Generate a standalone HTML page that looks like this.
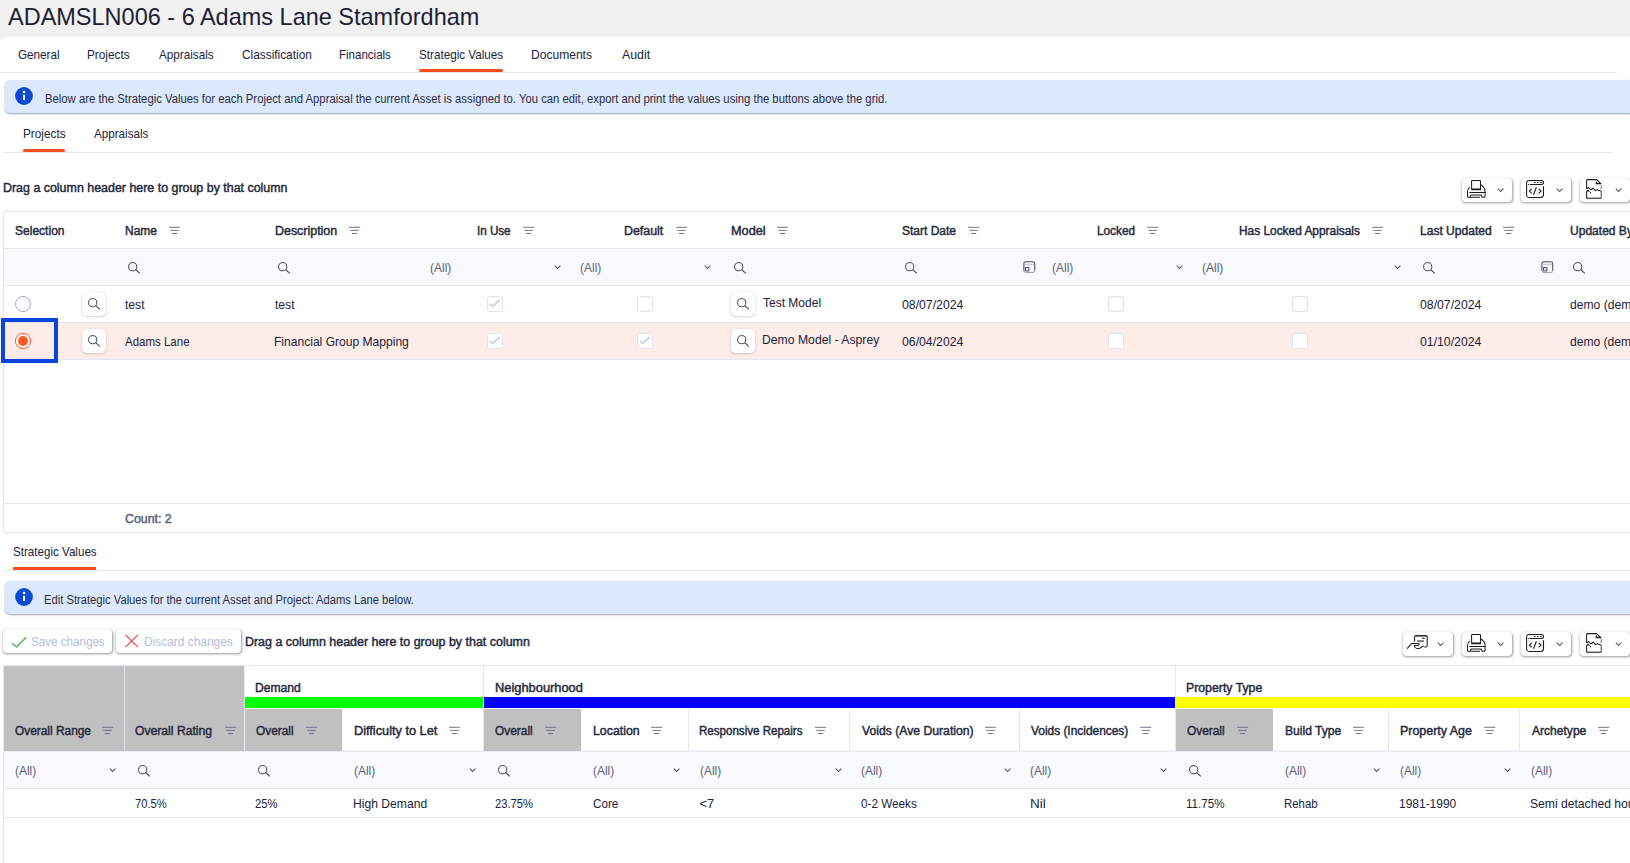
<!DOCTYPE html>
<html><head><meta charset="utf-8"><title>Strategic Values</title><style>
html,body{margin:0;padding:0;background:#fff}
body{width:1630px;height:863px;overflow:hidden;position:relative;font-family:"Liberation Sans",sans-serif;}
.a{position:absolute;display:block}
.t{position:absolute;white-space:pre;line-height:20px;height:20px;transform-origin:0 0}
</style></head><body>
<div class="a" style="left:0px;top:0px;width:1630px;height:47px;background:#f1f1f1;"></div>
<div class="a" style="left:0;top:37px;width:1630px;height:826px;background:#fff;border-top-left-radius:9px 5px"></div>
<div class="a" style="left:0px;top:72px;width:1617px;height:1px;background:#e4e7f1;"></div>
<div class="a" style="left:419px;top:69px;width:84px;height:3px;background:#ff4e1c;border-radius:2px"></div>
<div class="a" style="left:4.5px;top:80px;width:1630px;height:33px;background:#dce8fb;border-radius:5px;box-shadow:0 1px 2px rgba(40,50,80,.45)"></div>
<svg class="a" style="left:14px;top:86px" width="20" height="20" viewBox="0 0 20 20"><circle cx="10" cy="10" r="8.9" fill="#0b4bd2"/><rect x="9.1" y="8.7" width="1.9" height="5.3" fill="#fff"/><circle cx="10.05" cy="6" r="1.25" fill="#fff"/></svg>
<div class="a" style="left:3px;top:152px;width:1609px;height:1px;background:#e4e7f1;"></div>
<div class="a" style="left:23px;top:149px;width:42px;height:3px;background:#ff4e1c;border-radius:2px"></div>
<div class="a" style="left:1462px;top:178px;width:50px;height:24px;border-radius:4px;background:#fff;box-shadow:.5px 1px 2.5px rgba(30,30,40,.45),0 0 1px rgba(30,30,40,.14)"></div>
<svg class="a" style="left:1466px;top:179px" width="21" height="20" viewBox="0 0 21 20"><g stroke="#1b1b1f" stroke-width="1.05" fill="none"><path d="M5.6 10.7V2.2Q5.6 1.4 6.4 1.4H13.7Q14.5 1.4 14.5 2.2V10.7H5.6M5.8 10H14.4"/><path d="M3.7 8.1C2.2 9.4 1.5 11 1.5 13V17.2Q1.5 18.2 2.5 18.2H3.6Q4.5 18.2 4.5 17.2V16.9Q4.5 15.9 5.5 15.9H14.7Q15.7 15.9 15.7 16.9V17.2Q15.7 18.2 16.7 18.2H18.1Q19.1 18.2 19.1 17.2V13C19.1 10 17.6 7.6 15 6"/><path d="M4.5 18.2H14M3.3 13.4H19.2"/></g></svg>
<svg class="a" style="left:1497px;top:188px" width="8" height="6" viewBox="0 0 8 6"><path d="M0.8 0.6L3.6 3.5L6.4 0.6" stroke="#4a4f68" stroke-width="1.05" fill="none"/></svg>
<div class="a" style="left:1521px;top:178px;width:50px;height:24px;border-radius:4px;background:#fff;box-shadow:.5px 1px 2.5px rgba(30,30,40,.45),0 0 1px rgba(30,30,40,.14)"></div>
<svg class="a" style="left:1525px;top:179px" width="21" height="20" viewBox="0 0 21 20"><g stroke="#1b1b1f" stroke-width="1.05" fill="none"><path d="M18.5 7.3V15.8Q18.5 18.4 15.9 18.4H4.2Q1.6 18.4 1.6 15.8V4Q1.6 1.4 4.2 1.4H16.5A2 2 0 0 1 16.5 5.4H4.6M2.9 5.4h0.9"/><path d="M9 3.5h1.6M12 3.5h1.6M15 3.5h1.7" stroke-width="1"/><path d="M6.7 9.8L4.4 12.1L6.7 14.4M11.4 8.3L8.5 15.8M13.7 9.8L16 12.1L13.7 14.4" stroke-width="1.1"/></g></svg>
<svg class="a" style="left:1556px;top:188px" width="8" height="6" viewBox="0 0 8 6"><path d="M0.8 0.6L3.6 3.5L6.4 0.6" stroke="#4a4f68" stroke-width="1.05" fill="none"/></svg>
<div class="a" style="left:1580px;top:178px;width:50px;height:24px;border-radius:4px;background:#fff;box-shadow:.5px 1px 2.5px rgba(30,30,40,.45),0 0 1px rgba(30,30,40,.14)"></div>
<svg class="a" style="left:1585px;top:178px" width="19" height="23" viewBox="0 0 19 23"><g stroke="#1b1b1f" stroke-width="1.05" fill="none"><path d="M1.6 10.8V2.4Q1.6 1.6 2.4 1.6H11.6L16.3 6.1"/><path d="M11.3 3.6V5.5H15.6" stroke-width="1.3"/><path d="M16.2 7.2V10.9" stroke="#777"/><path d="M1.6 10.9L3.4 9.4L5.8 11.8L8.1 10.2L10.5 12.6L12.3 11.5L14.2 12.6L16.2 12.9"/><path d="M1.6 13.4L3.1 12.3L4.4 13.8M5 14.6h1"/><path d="M1.6 13.2V20.2"/><path d="M16.2 13V20.2" stroke="#555"/><path d="M1.4 20.3H16.4" stroke="#555" stroke-width="1.5"/></g></svg>
<svg class="a" style="left:1615px;top:188px" width="8" height="6" viewBox="0 0 8 6"><path d="M0.8 0.6L3.6 3.5L6.4 0.6" stroke="#4a4f68" stroke-width="1.05" fill="none"/></svg>
<div class="a" style="left:3px;top:211px;width:1630px;height:1px;background:#e4e7f1;"></div>
<div class="a" style="left:3px;top:211px;width:1px;height:322px;background:#e4e7f1;"></div>
<div class="a" style="left:4px;top:248px;width:1630px;height:1px;background:#e4e7f1;"></div>
<div class="a" style="left:4px;top:249px;width:1630px;height:36px;background:#f9fafe;"></div>
<div class="a" style="left:4px;top:285px;width:1630px;height:1px;background:#e4e7f1;"></div>
<div class="a" style="left:4px;top:322px;width:1630px;height:1px;background:#e4e7f1;"></div>
<div class="a" style="left:4px;top:323px;width:1630px;height:36px;background:#fdece8;"></div>
<div class="a" style="left:4px;top:359px;width:1630px;height:1px;background:#e4e7f1;"></div>
<div class="a" style="left:4px;top:503px;width:1630px;height:1px;background:#e4e7f1;"></div>
<div class="a" style="left:3px;top:532px;width:1630px;height:1px;background:#e4e7f1;"></div>
<svg class="a" style="left:169.3px;top:226px" width="12" height="9" viewBox="0 0 12 9"><path d="M0 1.3H11.2M1.4 4.4H9.8M3 7.5H8.2" stroke="#6a6f86" stroke-width="0.95" fill="none"/></svg>
<svg class="a" style="left:349px;top:226px" width="12" height="9" viewBox="0 0 12 9"><path d="M0 1.3H11.2M1.4 4.4H9.8M3 7.5H8.2" stroke="#6a6f86" stroke-width="0.95" fill="none"/></svg>
<svg class="a" style="left:523px;top:226px" width="12" height="9" viewBox="0 0 12 9"><path d="M0 1.3H11.2M1.4 4.4H9.8M3 7.5H8.2" stroke="#6a6f86" stroke-width="0.95" fill="none"/></svg>
<svg class="a" style="left:676.3px;top:226px" width="12" height="9" viewBox="0 0 12 9"><path d="M0 1.3H11.2M1.4 4.4H9.8M3 7.5H8.2" stroke="#6a6f86" stroke-width="0.95" fill="none"/></svg>
<svg class="a" style="left:776.8px;top:226px" width="12" height="9" viewBox="0 0 12 9"><path d="M0 1.3H11.2M1.4 4.4H9.8M3 7.5H8.2" stroke="#6a6f86" stroke-width="0.95" fill="none"/></svg>
<svg class="a" style="left:968px;top:226px" width="12" height="9" viewBox="0 0 12 9"><path d="M0 1.3H11.2M1.4 4.4H9.8M3 7.5H8.2" stroke="#6a6f86" stroke-width="0.95" fill="none"/></svg>
<svg class="a" style="left:1146.5px;top:226px" width="12" height="9" viewBox="0 0 12 9"><path d="M0 1.3H11.2M1.4 4.4H9.8M3 7.5H8.2" stroke="#6a6f86" stroke-width="0.95" fill="none"/></svg>
<svg class="a" style="left:1372.3px;top:226px" width="12" height="9" viewBox="0 0 12 9"><path d="M0 1.3H11.2M1.4 4.4H9.8M3 7.5H8.2" stroke="#6a6f86" stroke-width="0.95" fill="none"/></svg>
<svg class="a" style="left:1503px;top:226px" width="12" height="9" viewBox="0 0 12 9"><path d="M0 1.3H11.2M1.4 4.4H9.8M3 7.5H8.2" stroke="#6a6f86" stroke-width="0.95" fill="none"/></svg>
<svg class="a" style="left:128px;top:262px" width="13" height="13" viewBox="0 0 13 13"><circle cx="4.7" cy="4.7" r="4.1" stroke="#3b4058" stroke-width="1" fill="none"/><path d="M7.7 7.7L11.8 11.4" stroke="#3b4058" stroke-width="1.1" fill="none"/></svg>
<svg class="a" style="left:278px;top:262px" width="13" height="13" viewBox="0 0 13 13"><circle cx="4.7" cy="4.7" r="4.1" stroke="#3b4058" stroke-width="1" fill="none"/><path d="M7.7 7.7L11.8 11.4" stroke="#3b4058" stroke-width="1.1" fill="none"/></svg>
<svg class="a" style="left:733.7px;top:262px" width="13" height="13" viewBox="0 0 13 13"><circle cx="4.7" cy="4.7" r="4.1" stroke="#3b4058" stroke-width="1" fill="none"/><path d="M7.7 7.7L11.8 11.4" stroke="#3b4058" stroke-width="1.1" fill="none"/></svg>
<svg class="a" style="left:904.9px;top:262px" width="13" height="13" viewBox="0 0 13 13"><circle cx="4.7" cy="4.7" r="4.1" stroke="#3b4058" stroke-width="1" fill="none"/><path d="M7.7 7.7L11.8 11.4" stroke="#3b4058" stroke-width="1.1" fill="none"/></svg>
<svg class="a" style="left:1422.7px;top:262px" width="13" height="13" viewBox="0 0 13 13"><circle cx="4.7" cy="4.7" r="4.1" stroke="#3b4058" stroke-width="1" fill="none"/><path d="M7.7 7.7L11.8 11.4" stroke="#3b4058" stroke-width="1.1" fill="none"/></svg>
<svg class="a" style="left:1572.9px;top:262px" width="13" height="13" viewBox="0 0 13 13"><circle cx="4.7" cy="4.7" r="4.1" stroke="#3b4058" stroke-width="1" fill="none"/><path d="M7.7 7.7L11.8 11.4" stroke="#3b4058" stroke-width="1.1" fill="none"/></svg>
<svg class="a" style="left:554.3px;top:265px" width="8" height="6" viewBox="0 0 8 6"><path d="M0.8 0.6L3.6 3.5L6.4 0.6" stroke="#4a4f68" stroke-width="1.05" fill="none"/></svg>
<svg class="a" style="left:704.3px;top:265px" width="8" height="6" viewBox="0 0 8 6"><path d="M0.8 0.6L3.6 3.5L6.4 0.6" stroke="#4a4f68" stroke-width="1.05" fill="none"/></svg>
<svg class="a" style="left:1175.7px;top:265px" width="8" height="6" viewBox="0 0 8 6"><path d="M0.8 0.6L3.6 3.5L6.4 0.6" stroke="#4a4f68" stroke-width="1.05" fill="none"/></svg>
<svg class="a" style="left:1393.6px;top:265px" width="8" height="6" viewBox="0 0 8 6"><path d="M0.8 0.6L3.6 3.5L6.4 0.6" stroke="#4a4f68" stroke-width="1.05" fill="none"/></svg>
<svg class="a" style="left:1022.5px;top:260.5px" width="13" height="13" viewBox="0 0 13 13"><path d="M0.9 9.8V2.6Q0.9 0.7 2.8 0.7H9.8Q11.7 0.7 11.7 2.6V9.8" stroke="#454a66" stroke-width="1.05" fill="none"/><path d="M0.9 9.6Q0.9 11.5 2.8 11.5H9.8Q11.7 11.5 11.7 9.6" stroke="#9fa3b8" stroke-width="1.1" fill="none"/><path d="M1.4 3.3H11.2" stroke="#c2c5d3" stroke-width="1.2"/><rect x="2.6" y="6.6" width="3.3" height="3.3" stroke="#454a66" stroke-width="1" fill="none"/></svg>
<svg class="a" style="left:1540.8px;top:260.5px" width="13" height="13" viewBox="0 0 13 13"><path d="M0.9 9.8V2.6Q0.9 0.7 2.8 0.7H9.8Q11.7 0.7 11.7 2.6V9.8" stroke="#454a66" stroke-width="1.05" fill="none"/><path d="M0.9 9.6Q0.9 11.5 2.8 11.5H9.8Q11.7 11.5 11.7 9.6" stroke="#9fa3b8" stroke-width="1.1" fill="none"/><path d="M1.4 3.3H11.2" stroke="#c2c5d3" stroke-width="1.2"/><rect x="2.6" y="6.6" width="3.3" height="3.3" stroke="#454a66" stroke-width="1" fill="none"/></svg>
<div class="a" style="left:82px;top:292px;width:24px;height:24px;border-radius:5px;background:#fff;box-shadow:0 1px 3px rgba(60,64,90,.22),0 0 1px rgba(60,64,90,.18)"></div>
<svg class="a" style="left:88px;top:298px" width="13" height="13" viewBox="0 0 13 13"><circle cx="4.7" cy="4.7" r="4.1" stroke="#3b4058" stroke-width="1" fill="none"/><path d="M7.7 7.7L11.8 11.4" stroke="#3b4058" stroke-width="1.1" fill="none"/></svg>
<div class="a" style="left:487px;top:296px;width:16px;height:16px;box-sizing:border-box;border:1px solid #e0e3ef;border-radius:3px;background:#fff"></div>
<svg class="a" style="left:487px;top:296px" width="16" height="16" viewBox="0 0 16 16"><path d="M2.8 7.6L5.6 10.4L12.8 3.9" stroke="#b3bfe3" stroke-width="1.2" fill="none"/></svg>
<div class="a" style="left:637px;top:296px;width:16px;height:16px;box-sizing:border-box;border:1px solid #e0e3ef;border-radius:3px;background:#fff"></div>
<div class="a" style="left:1108px;top:296px;width:16px;height:16px;box-sizing:border-box;border:1px solid #e0e3ef;border-radius:3px;background:#fff"></div>
<div class="a" style="left:1292px;top:296px;width:16px;height:16px;box-sizing:border-box;border:1px solid #e0e3ef;border-radius:3px;background:#fff"></div>
<div class="a" style="left:731px;top:292px;width:24px;height:24px;border-radius:5px;background:#fff;box-shadow:0 1px 3px rgba(60,64,90,.22),0 0 1px rgba(60,64,90,.18)"></div>
<svg class="a" style="left:737px;top:298px" width="13" height="13" viewBox="0 0 13 13"><circle cx="4.7" cy="4.7" r="4.1" stroke="#3b4058" stroke-width="1" fill="none"/><path d="M7.7 7.7L11.8 11.4" stroke="#3b4058" stroke-width="1.1" fill="none"/></svg>
<div class="a" style="left:82px;top:329px;width:24px;height:24px;border-radius:5px;background:#fff;box-shadow:0 1px 3px rgba(60,64,90,.22),0 0 1px rgba(60,64,90,.18)"></div>
<svg class="a" style="left:88px;top:335px" width="13" height="13" viewBox="0 0 13 13"><circle cx="4.7" cy="4.7" r="4.1" stroke="#3b4058" stroke-width="1" fill="none"/><path d="M7.7 7.7L11.8 11.4" stroke="#3b4058" stroke-width="1.1" fill="none"/></svg>
<div class="a" style="left:487px;top:333px;width:16px;height:16px;box-sizing:border-box;border:1px solid #e0e3ef;border-radius:3px;background:#fff"></div>
<svg class="a" style="left:487px;top:333px" width="16" height="16" viewBox="0 0 16 16"><path d="M2.8 7.6L5.6 10.4L12.8 3.9" stroke="#b3bfe3" stroke-width="1.2" fill="none"/></svg>
<div class="a" style="left:637px;top:333px;width:16px;height:16px;box-sizing:border-box;border:1px solid #e0e3ef;border-radius:3px;background:#fff"></div>
<svg class="a" style="left:637px;top:333px" width="16" height="16" viewBox="0 0 16 16"><path d="M2.8 7.6L5.6 10.4L12.8 3.9" stroke="#b3bfe3" stroke-width="1.2" fill="none"/></svg>
<div class="a" style="left:1108px;top:333px;width:16px;height:16px;box-sizing:border-box;border:1px solid #e0e3ef;border-radius:3px;background:#fff"></div>
<div class="a" style="left:1292px;top:333px;width:16px;height:16px;box-sizing:border-box;border:1px solid #e0e3ef;border-radius:3px;background:#fff"></div>
<div class="a" style="left:731px;top:329px;width:24px;height:24px;border-radius:5px;background:#fff;box-shadow:0 1px 3px rgba(60,64,90,.22),0 0 1px rgba(60,64,90,.18)"></div>
<svg class="a" style="left:737px;top:335px" width="13" height="13" viewBox="0 0 13 13"><circle cx="4.7" cy="4.7" r="4.1" stroke="#3b4058" stroke-width="1" fill="none"/><path d="M7.7 7.7L11.8 11.4" stroke="#3b4058" stroke-width="1.1" fill="none"/></svg>
<div class="a" style="left:15px;top:296px;width:16px;height:16px;box-sizing:border-box;border:1px solid #a3a9c6;border-radius:50%;background:#fff"></div>
<svg class="a" style="left:14px;top:332px" width="18" height="18" viewBox="0 0 18 18"><circle cx="9" cy="9" r="7.6" fill="#fff" stroke="#ff5722" stroke-width="1"/><circle cx="9" cy="9" r="4.9" fill="#ff5722"/></svg>
<div class="a" style="left:1px;top:318px;width:57px;height:45px;box-sizing:border-box;border:4px solid #0645e2"></div>
<div class="a" style="left:3px;top:570px;width:1630px;height:1px;background:#e4e7f1;"></div>
<div class="a" style="left:13px;top:567px;width:83px;height:3px;background:#ff4e1c;"></div>
<div class="a" style="left:4.5px;top:581px;width:1630px;height:33px;background:#dce8fb;border-radius:5px;box-shadow:0 1px 2px rgba(40,50,80,.45)"></div>
<svg class="a" style="left:14px;top:587px" width="20" height="20" viewBox="0 0 20 20"><circle cx="10" cy="10" r="8.9" fill="#0b4bd2"/><rect x="9.1" y="8.7" width="1.9" height="5.3" fill="#fff"/><circle cx="10.05" cy="6" r="1.25" fill="#fff"/></svg>
<div class="a" style="left:3px;top:629px;width:109px;height:24px;border-radius:4px;background:#fff;box-shadow:.5px 1px 2.5px rgba(30,30,40,.45),0 0 1px rgba(30,30,40,.14)"></div>
<div class="a" style="left:116px;top:629px;width:125px;height:24px;border-radius:4px;background:#fff;box-shadow:.5px 1px 2.5px rgba(30,30,40,.45),0 0 1px rgba(30,30,40,.14)"></div>
<svg class="a" style="left:11px;top:634px" width="16" height="14" viewBox="0 0 16 14"><path d="M1 9.3L5.6 12.9L15.1 3.2" stroke="#3fb24b" stroke-width="1.3" fill="none"/></svg>
<svg class="a" style="left:124px;top:634px" width="16" height="14" viewBox="0 0 16 14"><path d="M1.4 0.8L14 13.2M14 0.8L1.4 13.2" stroke="#ea4040" stroke-width="1.15" fill="none"/></svg>
<div class="a" style="left:1403px;top:632px;width:50px;height:24px;border-radius:4px;background:#fff;box-shadow:.5px 1px 2.5px rgba(30,30,40,.45),0 0 1px rgba(30,30,40,.14)"></div>
<svg class="a" style="left:1406px;top:634px" width="24" height="17" viewBox="0 0 24 17"><g stroke="#1b1b1f" stroke-width="1.05" fill="none"><path d="M8.6 7.6V3Q8.6 1.6 10 1.6H19.8Q21.2 1.6 21.2 3V11.6Q21.2 13 19.8 13H18.2"/><path d="M9.8 2.2H20" stroke="#666"/><path d="M16.1 4.3H18.8"/><path d="M11.1 7.1H17.9" stroke="#555" stroke-width="1.5"/><path d="M1.1 14.6L5.7 9.5H11.7Q13.4 9.5 13.1 10.6Q12.8 11.5 11.5 11.5H8.3C8.6 13.6 10.8 14.7 12.8 14.5C14.4 14.4 15.4 12.9 16.4 12.6L17.8 12.3"/></g></svg>
<svg class="a" style="left:1437px;top:642px" width="8" height="6" viewBox="0 0 8 6"><path d="M0.8 0.6L3.6 3.5L6.4 0.6" stroke="#4a4f68" stroke-width="1.05" fill="none"/></svg>
<div class="a" style="left:1462px;top:632px;width:50px;height:24px;border-radius:4px;background:#fff;box-shadow:.5px 1px 2.5px rgba(30,30,40,.45),0 0 1px rgba(30,30,40,.14)"></div>
<svg class="a" style="left:1466px;top:633px" width="21" height="20" viewBox="0 0 21 20"><g stroke="#1b1b1f" stroke-width="1.05" fill="none"><path d="M5.6 10.7V2.2Q5.6 1.4 6.4 1.4H13.7Q14.5 1.4 14.5 2.2V10.7H5.6M5.8 10H14.4"/><path d="M3.7 8.1C2.2 9.4 1.5 11 1.5 13V17.2Q1.5 18.2 2.5 18.2H3.6Q4.5 18.2 4.5 17.2V16.9Q4.5 15.9 5.5 15.9H14.7Q15.7 15.9 15.7 16.9V17.2Q15.7 18.2 16.7 18.2H18.1Q19.1 18.2 19.1 17.2V13C19.1 10 17.6 7.6 15 6"/><path d="M4.5 18.2H14M3.3 13.4H19.2"/></g></svg>
<svg class="a" style="left:1497px;top:642px" width="8" height="6" viewBox="0 0 8 6"><path d="M0.8 0.6L3.6 3.5L6.4 0.6" stroke="#4a4f68" stroke-width="1.05" fill="none"/></svg>
<div class="a" style="left:1521px;top:632px;width:50px;height:24px;border-radius:4px;background:#fff;box-shadow:.5px 1px 2.5px rgba(30,30,40,.45),0 0 1px rgba(30,30,40,.14)"></div>
<svg class="a" style="left:1525px;top:633px" width="21" height="20" viewBox="0 0 21 20"><g stroke="#1b1b1f" stroke-width="1.05" fill="none"><path d="M18.5 7.3V15.8Q18.5 18.4 15.9 18.4H4.2Q1.6 18.4 1.6 15.8V4Q1.6 1.4 4.2 1.4H16.5A2 2 0 0 1 16.5 5.4H4.6M2.9 5.4h0.9"/><path d="M9 3.5h1.6M12 3.5h1.6M15 3.5h1.7" stroke-width="1"/><path d="M6.7 9.8L4.4 12.1L6.7 14.4M11.4 8.3L8.5 15.8M13.7 9.8L16 12.1L13.7 14.4" stroke-width="1.1"/></g></svg>
<svg class="a" style="left:1556px;top:642px" width="8" height="6" viewBox="0 0 8 6"><path d="M0.8 0.6L3.6 3.5L6.4 0.6" stroke="#4a4f68" stroke-width="1.05" fill="none"/></svg>
<div class="a" style="left:1580px;top:632px;width:50px;height:24px;border-radius:4px;background:#fff;box-shadow:.5px 1px 2.5px rgba(30,30,40,.45),0 0 1px rgba(30,30,40,.14)"></div>
<svg class="a" style="left:1585px;top:632px" width="19" height="23" viewBox="0 0 19 23"><g stroke="#1b1b1f" stroke-width="1.05" fill="none"><path d="M1.6 10.8V2.4Q1.6 1.6 2.4 1.6H11.6L16.3 6.1"/><path d="M11.3 3.6V5.5H15.6" stroke-width="1.3"/><path d="M16.2 7.2V10.9" stroke="#777"/><path d="M1.6 10.9L3.4 9.4L5.8 11.8L8.1 10.2L10.5 12.6L12.3 11.5L14.2 12.6L16.2 12.9"/><path d="M1.6 13.4L3.1 12.3L4.4 13.8M5 14.6h1"/><path d="M1.6 13.2V20.2"/><path d="M16.2 13V20.2" stroke="#555"/><path d="M1.4 20.3H16.4" stroke="#555" stroke-width="1.5"/></g></svg>
<svg class="a" style="left:1615px;top:642px" width="8" height="6" viewBox="0 0 8 6"><path d="M0.8 0.6L3.6 3.5L6.4 0.6" stroke="#4a4f68" stroke-width="1.05" fill="none"/></svg>
<div class="a" style="left:3px;top:665px;width:1630px;height:1px;background:#e4e7f1;"></div>
<div class="a" style="left:3px;top:665px;width:1px;height:200px;background:#e4e7f1;"></div>
<div class="a" style="left:4px;top:750px;width:1630px;height:1px;background:#f1f3f9;"></div>
<div class="a" style="left:4px;top:666px;width:120px;height:85px;background:#c0c0c0;"></div>
<div class="a" style="left:125px;top:666px;width:119px;height:85px;background:#c0c0c0;"></div>
<div class="a" style="left:245px;top:697px;width:238px;height:11px;background:#00ff00;"></div>
<div class="a" style="left:484px;top:697px;width:691px;height:11px;background:#0000ff;"></div>
<div class="a" style="left:1176px;top:697px;width:460px;height:11px;background:#ffff00;"></div>
<div class="a" style="left:245px;top:709px;width:97px;height:42px;background:#c0c0c0;"></div>
<div class="a" style="left:484px;top:709px;width:97px;height:42px;background:#c0c0c0;"></div>
<div class="a" style="left:1176px;top:709px;width:97px;height:42px;background:#c0c0c0;"></div>
<div class="a" style="left:124px;top:666px;width:1px;height:85px;background:#dfe1ea;"></div>
<div class="a" style="left:244px;top:666px;width:1px;height:85px;background:#e8eaf2;"></div>
<div class="a" style="left:483px;top:666px;width:1px;height:85px;background:#e4e7f1;"></div>
<div class="a" style="left:1175px;top:666px;width:1px;height:85px;background:#e4e7f1;"></div>
<div class="a" style="left:688px;top:709px;width:1px;height:42px;background:#e4e7f1;"></div>
<div class="a" style="left:849px;top:709px;width:1px;height:42px;background:#e4e7f1;"></div>
<div class="a" style="left:1019px;top:709px;width:1px;height:42px;background:#e4e7f1;"></div>
<div class="a" style="left:1388px;top:709px;width:1px;height:42px;background:#e4e7f1;"></div>
<div class="a" style="left:1519px;top:709px;width:1px;height:42px;background:#e4e7f1;"></div>
<div class="a" style="left:4px;top:751px;width:1630px;height:1px;background:#e9ecf5;"></div>
<div class="a" style="left:4px;top:752px;width:1630px;height:36px;background:#f9fafe;"></div>
<div class="a" style="left:4px;top:788px;width:1630px;height:1px;background:#e4e7f1;"></div>
<div class="a" style="left:4px;top:817px;width:1630px;height:1px;background:#e4e7f1;"></div>
<svg class="a" style="left:102.3px;top:726px" width="12" height="9" viewBox="0 0 12 9"><path d="M0 1.3H11.2M1.4 4.4H9.8M3 7.5H8.2" stroke="#6a6f86" stroke-width="0.95" fill="none"/></svg>
<svg class="a" style="left:224.5px;top:726px" width="12" height="9" viewBox="0 0 12 9"><path d="M0 1.3H11.2M1.4 4.4H9.8M3 7.5H8.2" stroke="#6a6f86" stroke-width="0.95" fill="none"/></svg>
<svg class="a" style="left:305.5px;top:726px" width="12" height="9" viewBox="0 0 12 9"><path d="M0 1.3H11.2M1.4 4.4H9.8M3 7.5H8.2" stroke="#6a6f86" stroke-width="0.95" fill="none"/></svg>
<svg class="a" style="left:449px;top:726px" width="12" height="9" viewBox="0 0 12 9"><path d="M0 1.3H11.2M1.4 4.4H9.8M3 7.5H8.2" stroke="#6a6f86" stroke-width="0.95" fill="none"/></svg>
<svg class="a" style="left:544.7px;top:726px" width="12" height="9" viewBox="0 0 12 9"><path d="M0 1.3H11.2M1.4 4.4H9.8M3 7.5H8.2" stroke="#6a6f86" stroke-width="0.95" fill="none"/></svg>
<svg class="a" style="left:651.3px;top:726px" width="12" height="9" viewBox="0 0 12 9"><path d="M0 1.3H11.2M1.4 4.4H9.8M3 7.5H8.2" stroke="#6a6f86" stroke-width="0.95" fill="none"/></svg>
<svg class="a" style="left:814.7px;top:726px" width="12" height="9" viewBox="0 0 12 9"><path d="M0 1.3H11.2M1.4 4.4H9.8M3 7.5H8.2" stroke="#6a6f86" stroke-width="0.95" fill="none"/></svg>
<svg class="a" style="left:985px;top:726px" width="12" height="9" viewBox="0 0 12 9"><path d="M0 1.3H11.2M1.4 4.4H9.8M3 7.5H8.2" stroke="#6a6f86" stroke-width="0.95" fill="none"/></svg>
<svg class="a" style="left:1140px;top:726px" width="12" height="9" viewBox="0 0 12 9"><path d="M0 1.3H11.2M1.4 4.4H9.8M3 7.5H8.2" stroke="#6a6f86" stroke-width="0.95" fill="none"/></svg>
<svg class="a" style="left:1236.5px;top:726px" width="12" height="9" viewBox="0 0 12 9"><path d="M0 1.3H11.2M1.4 4.4H9.8M3 7.5H8.2" stroke="#6a6f86" stroke-width="0.95" fill="none"/></svg>
<svg class="a" style="left:1352.8px;top:726px" width="12" height="9" viewBox="0 0 12 9"><path d="M0 1.3H11.2M1.4 4.4H9.8M3 7.5H8.2" stroke="#6a6f86" stroke-width="0.95" fill="none"/></svg>
<svg class="a" style="left:1483.8px;top:726px" width="12" height="9" viewBox="0 0 12 9"><path d="M0 1.3H11.2M1.4 4.4H9.8M3 7.5H8.2" stroke="#6a6f86" stroke-width="0.95" fill="none"/></svg>
<svg class="a" style="left:1597.5px;top:726px" width="12" height="9" viewBox="0 0 12 9"><path d="M0 1.3H11.2M1.4 4.4H9.8M3 7.5H8.2" stroke="#6a6f86" stroke-width="0.95" fill="none"/></svg>
<svg class="a" style="left:138.4px;top:765px" width="13" height="13" viewBox="0 0 13 13"><circle cx="4.7" cy="4.7" r="4.1" stroke="#3b4058" stroke-width="1" fill="none"/><path d="M7.7 7.7L11.8 11.4" stroke="#3b4058" stroke-width="1.1" fill="none"/></svg>
<svg class="a" style="left:258.4px;top:765px" width="13" height="13" viewBox="0 0 13 13"><circle cx="4.7" cy="4.7" r="4.1" stroke="#3b4058" stroke-width="1" fill="none"/><path d="M7.7 7.7L11.8 11.4" stroke="#3b4058" stroke-width="1.1" fill="none"/></svg>
<svg class="a" style="left:498px;top:765px" width="13" height="13" viewBox="0 0 13 13"><circle cx="4.7" cy="4.7" r="4.1" stroke="#3b4058" stroke-width="1" fill="none"/><path d="M7.7 7.7L11.8 11.4" stroke="#3b4058" stroke-width="1.1" fill="none"/></svg>
<svg class="a" style="left:1189.4px;top:765px" width="13" height="13" viewBox="0 0 13 13"><circle cx="4.7" cy="4.7" r="4.1" stroke="#3b4058" stroke-width="1" fill="none"/><path d="M7.7 7.7L11.8 11.4" stroke="#3b4058" stroke-width="1.1" fill="none"/></svg>
<svg class="a" style="left:109px;top:768px" width="8" height="6" viewBox="0 0 8 6"><path d="M0.8 0.6L3.6 3.5L6.4 0.6" stroke="#4a4f68" stroke-width="1.05" fill="none"/></svg>
<svg class="a" style="left:468.5px;top:768px" width="8" height="6" viewBox="0 0 8 6"><path d="M0.8 0.6L3.6 3.5L6.4 0.6" stroke="#4a4f68" stroke-width="1.05" fill="none"/></svg>
<svg class="a" style="left:672.6px;top:768px" width="8" height="6" viewBox="0 0 8 6"><path d="M0.8 0.6L3.6 3.5L6.4 0.6" stroke="#4a4f68" stroke-width="1.05" fill="none"/></svg>
<svg class="a" style="left:834.6px;top:768px" width="8" height="6" viewBox="0 0 8 6"><path d="M0.8 0.6L3.6 3.5L6.4 0.6" stroke="#4a4f68" stroke-width="1.05" fill="none"/></svg>
<svg class="a" style="left:1003.9px;top:768px" width="8" height="6" viewBox="0 0 8 6"><path d="M0.8 0.6L3.6 3.5L6.4 0.6" stroke="#4a4f68" stroke-width="1.05" fill="none"/></svg>
<svg class="a" style="left:1160px;top:768px" width="8" height="6" viewBox="0 0 8 6"><path d="M0.8 0.6L3.6 3.5L6.4 0.6" stroke="#4a4f68" stroke-width="1.05" fill="none"/></svg>
<svg class="a" style="left:1373.4px;top:768px" width="8" height="6" viewBox="0 0 8 6"><path d="M0.8 0.6L3.6 3.5L6.4 0.6" stroke="#4a4f68" stroke-width="1.05" fill="none"/></svg>
<svg class="a" style="left:1504px;top:768px" width="8" height="6" viewBox="0 0 8 6"><path d="M0.8 0.6L3.6 3.5L6.4 0.6" stroke="#4a4f68" stroke-width="1.05" fill="none"/></svg>
<div class="t" style="left:8.20px;top:6.78px;font-size:24px;font-weight:400;color:#1d2136;transform:scaleX(0.9788)">ADAMSLN006 - 6 Adams Lane Stamfordham</div>
<div class="t" style="left:17.75px;top:44.80px;font-size:13px;font-weight:400;color:#20243a;transform:scaleX(0.9000)">General</div>
<div class="t" style="left:87.49px;top:44.80px;font-size:13px;font-weight:400;color:#20243a;transform:scaleX(0.9077)">Projects</div>
<div class="t" style="left:158.60px;top:44.80px;font-size:13px;font-weight:400;color:#20243a;transform:scaleX(0.8996)">Appraisals</div>
<div class="t" style="left:241.74px;top:44.80px;font-size:13px;font-weight:400;color:#20243a;transform:scaleX(0.9116)">Classification</div>
<div class="t" style="left:339.11px;top:44.80px;font-size:13px;font-weight:400;color:#20243a;transform:scaleX(0.8860)">Financials</div>
<div class="t" style="left:419.05px;top:44.80px;font-size:13px;font-weight:400;color:#20243a;transform:scaleX(0.8981)">Strategic Values</div>
<div class="t" style="left:531.47px;top:44.80px;font-size:13px;font-weight:400;color:#20243a;transform:scaleX(0.9276)">Documents</div>
<div class="t" style="left:621.50px;top:44.80px;font-size:13px;font-weight:400;color:#20243a;transform:scaleX(0.9492)">Audit</div>
<div class="t" style="left:44.60px;top:88.67px;font-size:12.5px;font-weight:400;color:#2a2e45;transform:scaleX(0.9042)">Below are the Strategic Values for each Project and Appraisal the current Asset is assigned to. You can edit, export and print the values using the buttons above the grid.</div>
<div class="t" style="left:22.59px;top:124.00px;font-size:13px;font-weight:400;color:#20243a;transform:scaleX(0.9077)">Projects</div>
<div class="t" style="left:94.00px;top:124.00px;font-size:13px;font-weight:400;color:#20243a;transform:scaleX(0.8963)">Appraisals</div>
<div class="t" style="left:3.24px;top:178.04px;font-size:12.3px;font-weight:400;-webkit-text-stroke:0.45px currentColor;color:#262a3d;transform:scaleX(1.0103)">Drag a column header here to group by that column</div>
<div class="t" style="left:15.36px;top:220.94px;font-size:12.3px;font-weight:400;-webkit-text-stroke:0.45px currentColor;color:#262a3d;transform:scaleX(0.9789)">Selection</div>
<div class="t" style="left:125.07px;top:220.94px;font-size:12.3px;font-weight:400;-webkit-text-stroke:0.45px currentColor;color:#262a3d;transform:scaleX(0.9732)">Name</div>
<div class="t" style="left:274.84px;top:220.94px;font-size:12.3px;font-weight:400;-webkit-text-stroke:0.45px currentColor;color:#262a3d;transform:scaleX(1.0108)">Description</div>
<div class="t" style="left:477.29px;top:220.94px;font-size:12.3px;font-weight:400;-webkit-text-stroke:0.45px currentColor;color:#262a3d;transform:scaleX(0.9449)">In Use</div>
<div class="t" style="left:624.34px;top:220.94px;font-size:12.3px;font-weight:400;-webkit-text-stroke:0.45px currentColor;color:#262a3d;transform:scaleX(1.0078)">Default</div>
<div class="t" style="left:730.52px;top:220.94px;font-size:12.3px;font-weight:400;-webkit-text-stroke:0.45px currentColor;color:#262a3d;transform:scaleX(1.0357)">Model</div>
<div class="t" style="left:902.06px;top:220.94px;font-size:12.3px;font-weight:400;-webkit-text-stroke:0.45px currentColor;color:#262a3d;transform:scaleX(0.9753)">Start Date</div>
<div class="t" style="left:1096.58px;top:220.94px;font-size:12.3px;font-weight:400;-webkit-text-stroke:0.45px currentColor;color:#262a3d;transform:scaleX(0.9584)">Locked</div>
<div class="t" style="left:1238.98px;top:220.94px;font-size:12.3px;font-weight:400;-webkit-text-stroke:0.45px currentColor;color:#262a3d;transform:scaleX(0.9666)">Has Locked Appraisals</div>
<div class="t" style="left:1419.67px;top:220.94px;font-size:12.3px;font-weight:400;-webkit-text-stroke:0.45px currentColor;color:#262a3d;transform:scaleX(0.9792)">Last Updated</div>
<div class="t" style="left:1569.87px;top:220.94px;font-size:12.3px;font-weight:400;-webkit-text-stroke:0.45px currentColor;color:#262a3d;transform:scaleX(0.9792)">Updated By</div>
<div class="t" style="left:430.40px;top:257.76px;font-size:12.8px;font-weight:400;color:#5d6179;transform:scaleX(0.9365)">(All)</div>
<div class="t" style="left:580.40px;top:257.76px;font-size:12.8px;font-weight:400;color:#5d6179;transform:scaleX(0.9365)">(All)</div>
<div class="t" style="left:1052.10px;top:257.76px;font-size:12.8px;font-weight:400;color:#5d6179;transform:scaleX(0.9365)">(All)</div>
<div class="t" style="left:1201.70px;top:257.76px;font-size:12.8px;font-weight:400;color:#5d6179;transform:scaleX(0.9365)">(All)</div>
<div class="t" style="left:1569.83px;top:294.56px;font-size:12.8px;font-weight:400;color:#20243a;transform:scaleX(0.9481)">demo (dem</div>
<div class="t" style="left:1569.83px;top:331.56px;font-size:12.8px;font-weight:400;color:#20243a;transform:scaleX(0.9430)">demo (dem</div>
<div class="t" style="left:125.06px;top:294.56px;font-size:12.8px;font-weight:400;color:#20243a;transform:scaleX(0.9481)">test</div>
<div class="t" style="left:275.06px;top:294.56px;font-size:12.8px;font-weight:400;color:#20243a;transform:scaleX(0.9481)">test</div>
<div class="t" style="left:762.97px;top:293.26px;font-size:12.8px;font-weight:400;color:#20243a;transform:scaleX(0.9383)">Test Model</div>
<div class="t" style="left:901.52px;top:294.56px;font-size:12.8px;font-weight:400;color:#20243a;transform:scaleX(0.9581)">08/07/2024</div>
<div class="t" style="left:1419.52px;top:294.56px;font-size:12.8px;font-weight:400;color:#20243a;transform:scaleX(0.9581)">08/07/2024</div>
<div class="t" style="left:125.30px;top:331.56px;font-size:12.8px;font-weight:400;color:#20243a;transform:scaleX(0.8982)">Adams Lane</div>
<div class="t" style="left:274.36px;top:331.56px;font-size:12.8px;font-weight:400;color:#20243a;transform:scaleX(0.9430)">Financial Group Mapping</div>
<div class="t" style="left:762.25px;top:330.26px;font-size:12.8px;font-weight:400;color:#20243a;transform:scaleX(0.9533)">Demo Model - Asprey</div>
<div class="t" style="left:901.52px;top:331.56px;font-size:12.8px;font-weight:400;color:#20243a;transform:scaleX(0.9581)">06/04/2024</div>
<div class="t" style="left:1419.52px;top:331.56px;font-size:12.8px;font-weight:400;color:#20243a;transform:scaleX(0.9581)">01/10/2024</div>
<div class="t" style="left:125.15px;top:508.84px;font-size:12.3px;font-weight:400;-webkit-text-stroke:0.45px currentColor;color:#5a5f73;transform:scaleX(1.0043)">Count: 2</div>
<div class="t" style="left:12.75px;top:541.70px;font-size:13px;font-weight:400;color:#20243a;transform:scaleX(0.8927)">Strategic Values</div>
<div class="t" style="left:44.40px;top:589.77px;font-size:12.5px;font-weight:400;color:#2a2e45;transform:scaleX(0.8965)">Edit Strategic Values for the current Asset and Project: Adams Lane below.</div>
<div class="t" style="left:30.85px;top:631.66px;font-size:12.8px;font-weight:400;color:#b5bede;transform:scaleX(0.9084)">Save changes</div>
<div class="t" style="left:143.67px;top:631.66px;font-size:12.8px;font-weight:400;color:#b5bede;transform:scaleX(0.9319)">Discard changes</div>
<div class="t" style="left:244.54px;top:631.74px;font-size:12.3px;font-weight:400;-webkit-text-stroke:0.45px currentColor;color:#262a3d;transform:scaleX(1.0114)">Drag a column header here to group by that column</div>
<div class="t" style="left:255.36px;top:677.94px;font-size:12.3px;font-weight:400;-webkit-text-stroke:0.45px currentColor;color:#262a3d;transform:scaleX(0.9856)">Demand</div>
<div class="t" style="left:494.92px;top:677.94px;font-size:12.3px;font-weight:400;-webkit-text-stroke:0.45px currentColor;color:#262a3d;transform:scaleX(1.0453)">Neighbourhood</div>
<div class="t" style="left:1186.35px;top:677.94px;font-size:12.3px;font-weight:400;-webkit-text-stroke:0.45px currentColor;color:#262a3d;transform:scaleX(0.9993)">Property Type</div>
<div class="t" style="left:15.06px;top:720.74px;font-size:12.3px;font-weight:400;-webkit-text-stroke:0.45px currentColor;color:#262a3d;transform:scaleX(0.9667)">Overall Range</div>
<div class="t" style="left:135.45px;top:720.74px;font-size:12.3px;font-weight:400;-webkit-text-stroke:0.45px currentColor;color:#262a3d;transform:scaleX(0.9890)">Overall Rating</div>
<div class="t" style="left:255.86px;top:720.74px;font-size:12.3px;font-weight:400;-webkit-text-stroke:0.45px currentColor;color:#262a3d;transform:scaleX(0.9647)">Overall</div>
<div class="t" style="left:353.52px;top:720.74px;font-size:12.3px;font-weight:400;-webkit-text-stroke:0.45px currentColor;color:#262a3d;transform:scaleX(1.0357)">Difficulty to Let</div>
<div class="t" style="left:495.46px;top:720.74px;font-size:12.3px;font-weight:400;-webkit-text-stroke:0.45px currentColor;color:#262a3d;transform:scaleX(0.9673)">Overall</div>
<div class="t" style="left:593.05px;top:720.74px;font-size:12.3px;font-weight:400;-webkit-text-stroke:0.45px currentColor;color:#262a3d;transform:scaleX(1.0033)">Location</div>
<div class="t" style="left:699.49px;top:720.74px;font-size:12.3px;font-weight:400;-webkit-text-stroke:0.45px currentColor;color:#262a3d;transform:scaleX(0.9404)">Responsive Repairs</div>
<div class="t" style="left:861.95px;top:720.74px;font-size:12.3px;font-weight:400;-webkit-text-stroke:0.45px currentColor;color:#262a3d;transform:scaleX(0.9915)">Voids (Ave Duration)</div>
<div class="t" style="left:1031.24px;top:720.74px;font-size:12.3px;font-weight:400;-webkit-text-stroke:0.45px currentColor;color:#262a3d;transform:scaleX(0.9676)">Voids (Incidences)</div>
<div class="t" style="left:1186.86px;top:720.74px;font-size:12.3px;font-weight:400;-webkit-text-stroke:0.45px currentColor;color:#262a3d;transform:scaleX(0.9647)">Overall</div>
<div class="t" style="left:1284.56px;top:720.74px;font-size:12.3px;font-weight:400;-webkit-text-stroke:0.45px currentColor;color:#262a3d;transform:scaleX(0.9849)">Build Type</div>
<div class="t" style="left:1400.14px;top:720.74px;font-size:12.3px;font-weight:400;-webkit-text-stroke:0.45px currentColor;color:#262a3d;transform:scaleX(1.0114)">Property Age</div>
<div class="t" style="left:1531.55px;top:720.74px;font-size:12.3px;font-weight:400;-webkit-text-stroke:0.45px currentColor;color:#262a3d;transform:scaleX(0.9810)">Archetype</div>
<div class="t" style="left:14.80px;top:760.66px;font-size:12.8px;font-weight:400;color:#5d6179;transform:scaleX(0.9318)">(All)</div>
<div class="t" style="left:353.60px;top:760.66px;font-size:12.8px;font-weight:400;color:#5d6179;transform:scaleX(0.9318)">(All)</div>
<div class="t" style="left:593.10px;top:760.66px;font-size:12.8px;font-weight:400;color:#5d6179;transform:scaleX(0.9318)">(All)</div>
<div class="t" style="left:699.50px;top:760.66px;font-size:12.8px;font-weight:400;color:#5d6179;transform:scaleX(0.9318)">(All)</div>
<div class="t" style="left:861.00px;top:760.66px;font-size:12.8px;font-weight:400;color:#5d6179;transform:scaleX(0.9318)">(All)</div>
<div class="t" style="left:1030.30px;top:760.66px;font-size:12.8px;font-weight:400;color:#5d6179;transform:scaleX(0.9318)">(All)</div>
<div class="t" style="left:1284.60px;top:760.66px;font-size:12.8px;font-weight:400;color:#5d6179;transform:scaleX(0.9318)">(All)</div>
<div class="t" style="left:1400.20px;top:760.66px;font-size:12.8px;font-weight:400;color:#5d6179;transform:scaleX(0.9318)">(All)</div>
<div class="t" style="left:1530.60px;top:760.66px;font-size:12.8px;font-weight:400;color:#5d6179;transform:scaleX(0.9318)">(All)</div>
<div class="t" style="left:134.96px;top:793.66px;font-size:12.8px;font-weight:400;color:#20243a;transform:scaleX(0.8732)">70.5%</div>
<div class="t" style="left:255.36px;top:793.66px;font-size:12.8px;font-weight:400;color:#20243a;transform:scaleX(0.8768)">25%</div>
<div class="t" style="left:352.75px;top:793.66px;font-size:12.8px;font-weight:400;color:#20243a;transform:scaleX(0.9477)">High Demand</div>
<div class="t" style="left:494.96px;top:793.66px;font-size:12.8px;font-weight:400;color:#20243a;transform:scaleX(0.8753)">23.75%</div>
<div class="t" style="left:592.54px;top:793.66px;font-size:12.8px;font-weight:400;color:#20243a;transform:scaleX(0.9121)">Core</div>
<div class="t" style="left:699.50px;top:793.66px;font-size:12.8px;font-weight:400;color:#20243a;transform:scaleX(1.0000)">&lt;7</div>
<div class="t" style="left:860.54px;top:793.66px;font-size:12.8px;font-weight:400;color:#20243a;transform:scaleX(0.9167)">0-2 Weeks</div>
<div class="t" style="left:1029.65px;top:793.66px;font-size:12.8px;font-weight:400;color:#20243a;transform:scaleX(1.0538)">Nil</div>
<div class="t" style="left:1185.89px;top:793.66px;font-size:12.8px;font-weight:400;color:#20243a;transform:scaleX(0.9073)">11.75%</div>
<div class="t" style="left:1283.81px;top:793.66px;font-size:12.8px;font-weight:400;color:#20243a;transform:scaleX(0.8910)">Rehab</div>
<div class="t" style="left:1399.36px;top:793.66px;font-size:12.8px;font-weight:400;color:#20243a;transform:scaleX(0.9356)">1981-1990</div>
<div class="t" style="left:1530.13px;top:793.66px;font-size:12.8px;font-weight:400;color:#20243a;transform:scaleX(0.9477)">Semi detached house</div>
</body></html>
